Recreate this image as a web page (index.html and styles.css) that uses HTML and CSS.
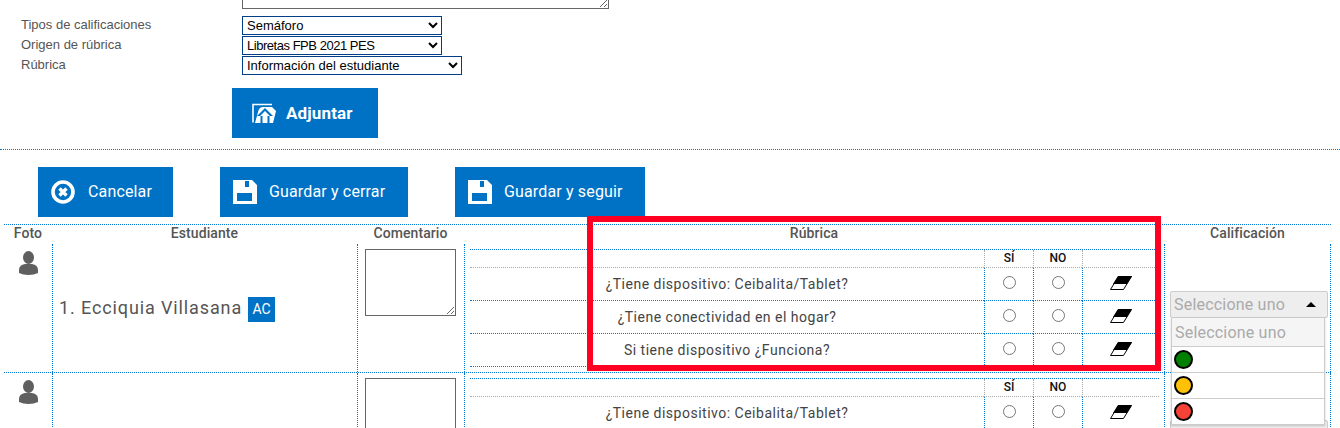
FILE: index.html
```html
<!DOCTYPE html>
<html lang="es">
<head>
<meta charset="utf-8">
<title>Calificaciones</title>
<link rel="stylesheet" href="styles.css">
</head>
<body>
<div class="page">
  <form class="fields">
    <span></span><textarea class="top-area"></textarea>
    <label>Tipos de calificaciones</label>
    <select class="sel sel-s"><option>Semáforo</option></select>
    <label>Origen de rúbrica</label>
    <select class="sel sel-s sel-tight"><option>Libretas FPB 2021 PES</option></select>
    <label>Rúbrica</label>
    <select class="sel sel-l"><option>Información del estudiante</option></select>
  </form>

  <div class="attach-row">
    <button class="btn btn-attach" type="button">
      <svg class="ic" viewBox="0 0 24 20"><path d="M1 19.500V1.500h19" fill="none" stroke="#fff" stroke-width="1.600"/><path d="M3 20l3-11q1-5 5-5h9l4 4-3 12z" fill="#fff"/><path d="M13 5l8 8h-3.500v7h-9v-7H5z" fill="#0072c6"/><path d="M13 8l5 5h-2.500v7h-5v-7H8z" fill="#fff"/></svg>
      Adjuntar
    </button>
  </div>

  <div class="actions">
    <button class="btn btn-cancel" type="button">
      <svg class="ic" viewBox="0 0 24 24"><circle cx="12" cy="12" r="10" fill="none" stroke="#fff" stroke-width="3.600"/><path d="M8.500 8.500l7 7m0-7l-7 7" stroke="#fff" stroke-width="3.400"/></svg>
      Cancelar
    </button>
    <button class="btn btn-close" type="button">
      <svg class="ic" viewBox="0 0 24 24"><path fill-rule="evenodd" d="M0 0h19l5 5v19H0zM4 13v8h15v-8zM12 1v6h4V1z" fill="#fff"/></svg>
      Guardar y cerrar
    </button>
    <button class="btn btn-next" type="button">
      <svg class="ic" viewBox="0 0 24 24"><path fill-rule="evenodd" d="M0 0h19l5 5v19H0zM4 13v8h15v-8zM12 1v6h4V1z" fill="#fff"/></svg>
      Guardar y seguir
    </button>
  </div>

  <div class="grid">
    <div class="row head">
      <div>Foto</div><div>Estudiante</div><div>Comentario</div><div>Rúbrica</div><div>Calificación</div>
    </div>

    <div class="row body">
      <div class="cell photo">
        <svg class="person" viewBox="0 0 19 24"><ellipse cx="9.500" cy="6.500" rx="5.500" ry="6.500" fill="#5f5f5f"/><path d="M0 19q0-5 6-6h7q6 1 6 6v3q-4 2-9.500 2T0 22z" fill="#5f5f5f"/></svg>
      </div>
      <div class="cell student"><span class="name">1. Ecciquia Villasana</span><span class="badge">AC</span></div>
      <div class="cell comment"><textarea class="note"></textarea></div>
      <div class="cell rubric">
        <div class="rgrid">
          <div class="rh"></div><div class="rh rc">SÍ</div><div class="rh rc">NO</div><div class="rh rc"></div>
          <div class="q">¿Tiene dispositivo: Ceibalita/Tablet?</div>
          <div class="a"><input type="radio" name="a1"></div><div class="a"><input type="radio" name="a1"></div>
          <div class="a"><svg class="eraser" viewBox="0 0 22 14"><path d="M8.500.5h13L13.500 13.500H.5z" fill="#fff" stroke="#000"/><path d="M8 0h14l-5 8H3z" fill="#000"/></svg></div>
          <div class="q">¿Tiene conectividad en el hogar?</div>
          <div class="a"><input type="radio" name="a2"></div><div class="a"><input type="radio" name="a2"></div>
          <div class="a"><svg class="eraser" viewBox="0 0 22 14"><path d="M8.500.5h13L13.500 13.500H.5z" fill="#fff" stroke="#000"/><path d="M8 0h14l-5 8H3z" fill="#000"/></svg></div>
          <div class="q">Si tiene dispositivo ¿Funciona?</div>
          <div class="a"><input type="radio" name="a3"></div><div class="a"><input type="radio" name="a3"></div>
          <div class="a"><svg class="eraser" viewBox="0 0 22 14"><path d="M8.500.5h13L13.500 13.500H.5z" fill="#fff" stroke="#000"/><path d="M8 0h14l-5 8H3z" fill="#000"/></svg></div>
        </div>
      </div>
      <div class="cell grade">
        <div class="s2">
          <div class="s2-box"><span>Seleccione uno</span><i class="caret"></i></div>
          <ul class="s2-menu">
            <li class="current">Seleccione uno</li>
            <li><i class="dot green"></i></li>
            <li><i class="dot amber"></i></li>
            <li><i class="dot red"></i></li>
          </ul>
        </div>
      </div>
    </div>

    <div class="row body">
      <div class="cell photo">
        <svg class="person" viewBox="0 0 19 24"><ellipse cx="9.500" cy="6.500" rx="5.500" ry="6.500" fill="#5f5f5f"/><path d="M0 19q0-5 6-6h7q6 1 6 6v3q-4 2-9.500 2T0 22z" fill="#5f5f5f"/></svg>
      </div>
      <div class="cell student"></div>
      <div class="cell comment"><textarea class="note"></textarea></div>
      <div class="cell rubric">
        <div class="rgrid">
          <div class="rh"></div><div class="rh rc">SÍ</div><div class="rh rc">NO</div><div class="rh rc"></div>
          <div class="q">¿Tiene dispositivo: Ceibalita/Tablet?</div>
          <div class="a"><input type="radio" name="b1"></div><div class="a"><input type="radio" name="b1"></div>
          <div class="a"><svg class="eraser" viewBox="0 0 22 14"><path d="M8.500.5h13L13.500 13.500H.5z" fill="#fff" stroke="#000"/><path d="M8 0h14l-5 8H3z" fill="#000"/></svg></div>
        </div>
      </div>
      <div class="cell grade"><div class="s2"><div class="s2-box"></div></div></div>
    </div>
  </div>

  <div class="highlight"></div>
</div>
</body>
</html>
```
FILE: styles.css
```css
* { box-sizing: border-box; }
html, body { margin: 0; height: 428px; overflow: hidden; background: #fff; }
.page { position: relative; height: 428px; overflow: hidden; font-family: Roboto, "Liberation Sans", sans-serif; }

.fields {
  display: grid;
  grid-template-columns: 221px 1fr;
  grid-auto-rows: 20px;
  padding-left: 21px;
  margin-top: -4px;
  font-family: "Liberation Sans", sans-serif;
}
.fields label { font-size: 13px; color: #555; line-height: 18px; }
.top-area {
  display: block;
  width: 367px;
  height: 40px;
  margin-top: -27px;
  border: 1px solid #666;
  background: #fff;
}
.sel {
  display: block;
  height: 19px;
  padding: 0;
  border: 1px solid #003f87;
  border-radius: 0;
  background: #fff;
  color: #000;
  font: 13px "Liberation Sans", sans-serif;
}
.sel-s { width: 200px; }
.sel-l { width: 220px; }
.sel-tight { letter-spacing: -.47px; }

.btn {
  display: flex;
  align-items: center;
  gap: 12px;
  height: 50px;
  padding: 0 0 0 13px;
  border: 0;
  background: #0072c6;
  color: #fff;
  font: 400 16px/20px Roboto, sans-serif;
  letter-spacing: .15px;
  white-space: nowrap;
}
.ic { width: 24px; height: 24px; flex: none; }
.attach-row {
  margin-top: 12px;
  padding: 0 0 11px 232px;
  border-bottom: 1px dotted #0078d7;
}
.btn-attach { width: 146px; padding-left: 20px; gap: 10px; font-weight: 700; font-size: 17px; }
.btn-attach .ic { height: 20px; }
.actions { display: flex; gap: 47px; padding: 17px 0 0 38px; }
.btn-cancel { width: 135px; gap: 13px; }
.btn-close { width: 188px; }
.btn-next { width: 190px; }

.grid { margin: 7px 0 0 4px; width: 1327px; }
.row { display: grid; grid-template-columns: 48px 305px 107px 700px 167px; }
.head { height: 20px; border-top: 1px dotted #0078d7; }
.head div { text-align: center; font-size: 14px; font-weight: 500; color: #555; line-height: 17px; letter-spacing: .08px; }
.body { height: 129px; border-bottom: 1px dotted #0078d7; }
.cell { border-left: 1px dotted #0078d7; }
.cell:first-child { border-left: 0; }
.cell:last-child { border-right: 1px dotted #0078d7; }
.photo { padding: 7px 0 0 15px; }
.person { display: block; width: 19px; height: 24px; }
.student { display: flex; align-items: center; gap: 6px; padding: 3px 0 0 6px; }
.name { font-size: 18px; line-height: 22px; margin-bottom: 4px; color: #555; letter-spacing: .88px; }
.badge {
  width: 27px;
  height: 25px;
  background: #0072c6;
  color: #fff;
  font-size: 14px;
  line-height: 25px;
  text-align: center;
}
.comment { padding: 5px 0 0 7px; }
.note {
  display: block;
  width: 91px;
  height: 67px;
  border: 1px solid #666;
  background: #fff;
}
.rubric { padding: 5px 5px 0 5px; }
.rgrid { display: grid; grid-template-columns: 514px 49px 49px 77px; grid-template-rows: 18px; grid-auto-rows: 33px; border-top: 1px dotted #0078d7; }
.rh { border-bottom: 1px dotted #aaa; font-size: 12px; font-weight: 500; color: #111; text-align: center; line-height: 16px; }
.rc { border-left: 1px dotted #aaa; }
.q, .a { border-bottom: 1px dotted #0078d7; }
.q { display: flex; align-items: center; justify-content: center; font-size: 14px; color: #444; letter-spacing: .5px; }
.a { display: flex; align-items: center; justify-content: center; padding-bottom: 3px; border-left: 1px dotted #0078d7; }
.a input { width: 13px; height: 13px; margin: 0; }
.eraser { display: block; width: 22px; height: 14px; }

.grade { padding: 47px 2px 0 5px; }
.s2 { position: relative; }
.s2-box {
  display: flex;
  align-items: center;
  justify-content: space-between;
  width: 158px;
  height: 27px;
  padding: 0 11px 0 3px;
  border: 1px solid #ccc;
  border-radius: 2px;
  background: #eee;
  color: #aaa;
  font-size: 16px;
  letter-spacing: .2px;
}
.caret { width: 0; height: 0; border: 5px solid transparent; border-bottom: 5px solid #000; border-top: 0; }
.s2-menu {
  position: absolute;
  z-index: 2;
  left: 1px;
  top: 27px;
  width: 154px;
  margin: 0;
  padding: 0;
  list-style: none;
  background: #fff;
  border: 1px solid #ccc;
  border-top: 0;
  box-shadow: 0 1px 2px rgba(0,0,0,.2);
  color: #aaa;
  font-size: 16px;
  letter-spacing: .2px;
}
.s2-menu li { display: flex; align-items: center; height: 26px; padding-left: 2px; border-bottom: 1px solid #ccc; }
.s2-menu li:last-child { height: 25px; border-bottom: 0; }
.s2-menu .current { height: 29px; padding-left: 3px; background: #f5f5f5; }
.dot { display: block; width: 19px; height: 19px; border-radius: 50%; border: 2.5px solid #000; }
.green { background: #008000; }
.amber { background: #ffc107; }
.red { background: #f44336; }

.highlight {
  position: absolute;
  left: 587px;
  top: 216px;
  width: 574px;
  height: 155px;
  border: 6px solid #ff0022;
  pointer-events: none;
}
```
